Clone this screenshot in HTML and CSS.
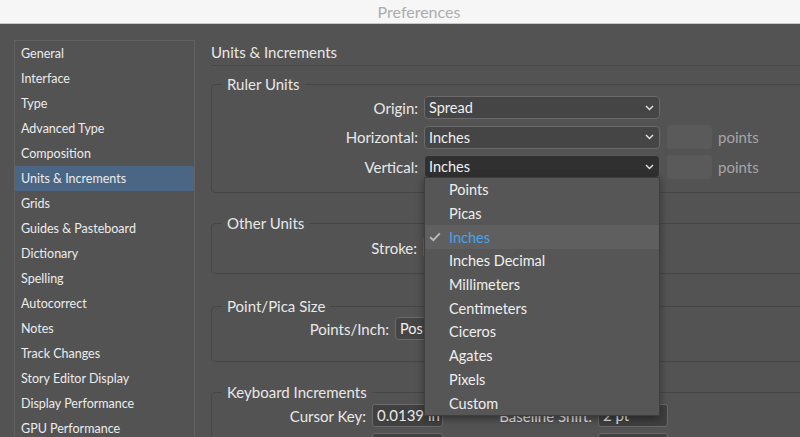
FILE: index.html
```html
<!DOCTYPE html>
<html lang="en">
<head>
    <meta charset="UTF-8">
    <meta name="viewport" content="width=device-width, initial-scale=1.0">
    <title>Preferences</title>
    <link rel="stylesheet" href="styles.css">
</head>
<body>

    <div class="titlebar">Preferences</div>

    <div class="window">
        <!-- Kategorien -->
        <ul class="sidebar">
            <li>General</li>
            <li>Interface</li>
            <li>Type</li>
            <li>Advanced Type</li>
            <li>Composition</li>
            <li class="is-active">Units &amp; Increments</li>
            <li>Grids</li>
            <li>Guides &amp; Pasteboard</li>
            <li>Dictionary</li>
            <li>Spelling</li>
            <li>Autocorrect</li>
            <li>Notes</li>
            <li>Track Changes</li>
            <li>Story Editor Display</li>
            <li>Display Performance</li>
            <li>GPU Performance</li>
        </ul>

        <div class="panel">
            <h1 class="panel-title">Units &amp; Increments</h1>

            <fieldset class="group group-ruler">
                <legend>Ruler Units</legend>
                <div class="rows">
                    <div class="row">
                        <span class="row-label">Origin:</span>
                        <div class="select">
                            <span>Spread</span>
                            <svg class="chevron" width="9" height="6" viewBox="0 0 9 6"><path d="M1 1 L4.5 4.6 L8 1"/></svg>
                        </div>
                    </div>
                    <div class="row">
                        <span class="row-label">Horizontal:</span>
                        <div class="select">
                            <span>Inches</span>
                            <svg class="chevron" width="9" height="6" viewBox="0 0 9 6"><path d="M1 1 L4.5 4.6 L8 1"/></svg>
                        </div>
                        <span class="unit-box"></span>
                        <span class="unit-label">points</span>
                    </div>
                    <div class="row">
                        <span class="row-label">Vertical:</span>
                        <div class="select select-open">
                            <span>Inches</span>
                            <svg class="chevron" width="9" height="6" viewBox="0 0 9 6"><path d="M1 1 L4.5 4.6 L8 1"/></svg>

                            <!-- offenes Dropdown -->
                            <ul class="menu">
                                <li><span class="menu-check"></span>Points</li>
                                <li><span class="menu-check"></span>Picas</li>
                                <li class="is-checked">
                                    <span class="menu-check"><svg width="12" height="10" viewBox="0 0 12 10"><path d="M1.2 5.2 L4.4 8.2 L10.8 1.4"/></svg></span>Inches
                                </li>
                                <li><span class="menu-check"></span>Inches Decimal</li>
                                <li><span class="menu-check"></span>Millimeters</li>
                                <li><span class="menu-check"></span>Centimeters</li>
                                <li><span class="menu-check"></span>Ciceros</li>
                                <li><span class="menu-check"></span>Agates</li>
                                <li><span class="menu-check"></span>Pixels</li>
                                <li><span class="menu-check"></span>Custom</li>
                            </ul>
                        </div>
                        <span class="unit-box"></span>
                        <span class="unit-label">points</span>
                    </div>
                </div>
            </fieldset>

            <fieldset class="group group-other">
                <legend>Other Units</legend>
                <div class="rows">
                    <div class="row">
                        <span class="row-label">Stroke:</span>
                        <div class="select">
                            <span></span>
                            <svg class="chevron" width="9" height="6" viewBox="0 0 9 6"><path d="M1 1 L4.5 4.6 L8 1"/></svg>
                        </div>
                    </div>
                </div>
            </fieldset>

            <fieldset class="group group-pica">
                <legend>Point/Pica Size</legend>
                <div class="rows">
                    <div class="row">
                        <span class="row-label">Points/Inch:</span>
                        <div class="select select-short">
                            <span>Pos</span>
                            <svg class="chevron" width="9" height="6" viewBox="0 0 9 6"><path d="M1 1 L4.5 4.6 L8 1"/></svg>
                        </div>
                    </div>
                </div>
            </fieldset>

            <fieldset class="group group-keys">
                <legend>Keyboard Increments</legend>
                <div class="rows">
                    <div class="row">
                        <span class="row-label">Cursor Key:</span>
                        <span class="field">0.0139 in</span>
                        <span class="row-label row-label-second">Baseline Shift:</span>
                        <span class="field field-narrow">2 pt</span>
                    </div>
                    <div class="row">
                        <span class="row-label"></span>
                        <span class="field"></span>
                        <span class="row-label row-label-second"></span>
                        <span class="field field-narrow"></span>
                    </div>
                </div>
            </fieldset>
        </div>
    </div>

</body>
</html>
```

FILE: styles.css
```css
body {
    margin: 0;
    height: 437px;
    overflow: hidden;
    background: #535353;
    font-family: Lato, 'Open Sans', sans-serif;
    font-size: 15px;
    color: #e8e8e8;
}

.titlebar {
    height: 23px;
    padding-left: 38px;
    background: #f6f6f6;
    border-bottom: 1px solid #c8c8c8;
    text-align: center;
    line-height: 23px;
    font-size: 16px;
    color: #acacac;
}

.window {
    display: flex;
}

/* Linke Kategorienliste */
.sidebar {
    flex-shrink: 0;
    list-style: none;
    margin: 16px 0 0 14px;
    padding: 0;
    width: 179px;
    height: 420px;
    border: 1px solid #626262;
    font-size: 12.5px;
    color: #ececec;
}

.sidebar li {
    height: 25px;
    line-height: 25px;
    padding-left: 6px;
}

.sidebar .is-active {
    background: #4a6684;
}

/* Rechte Seite */
.panel {
    flex-shrink: 0;
    width: 620px;
    margin-left: 16px;
}

.panel-title {
    margin: 16px 0 0;
    font-size: 15px;
    font-weight: normal;
    line-height: 25px;
    border-bottom: 1px solid #494949;
}

.group {
    margin: 20px 0 0;
    padding: 0 0 14px;
    border: 1px solid #464646;
    border-radius: 4px;
    min-width: 0;
}

.group legend {
    margin-left: 10px;
    padding: 0 5px;
    font-size: 15px;
    line-height: 20px;
}

.group-ruler {
    margin-top: 8px;
}

.group-pica {
    margin-top: 22px;
    padding-bottom: 21px;
}

.rows {
    display: grid;
    row-gap: 6.5px;
    padding-top: 2px;
}

.group-other .rows {
    padding-top: 3px;
}

.group-pica .rows {
    padding-top: 1px;
}

.group-keys .rows {
    row-gap: 6px;
}

.row {
    display: flex;
    align-items: center;
    gap: 6px;
    height: 23px;
}

.row-label {
    flex-shrink: 0;
    text-align: right;
}

.group-ruler .row-label { width: 206px; }
.group-other .row-label { width: 205px; }
.group-pica .row-label { width: 177px; }
.group-keys .row-label { width: 154px; }
.group-keys .row-label-second { width: 143px; }

/* Auswahlfelder */
.select {
    position: relative;
    box-sizing: border-box;
    display: flex;
    justify-content: space-between;
    align-items: center;
    width: 236px;
    height: 23px;
    padding: 0 5px 0 4px;
    background: #454545;
    border: 1px solid #6a6a6a;
    border-radius: 4px;
    font-size: 14.5px;
    color: #f0f0f0;
    white-space: nowrap;
}

.select-short {
    width: 200px;
}

.select-open {
    background: #303030;
    border-color: #575757;
}

.chevron path {
    fill: none;
    stroke: #e2e2e2;
    stroke-width: 1.4;
}

.unit-box {
    width: 45px;
    height: 24px;
    margin-left: 1px;
    background: #5a5a5a;
    border-radius: 3px;
}

.unit-label {
    color: #a6a6a6;
}

.field {
    box-sizing: border-box;
    flex-shrink: 0;
    width: 71px;
    height: 23px;
    padding: 0 4px;
    line-height: 21px;
    background: #404040;
    border: 1px solid #6a6a6a;
    border-radius: 3px;
    overflow: hidden;
    white-space: nowrap;
}

.field-narrow {
    width: 70px;
}

/* Dropdown-Menue */
.menu {
    position: absolute;
    top: 100%;
    left: -1px;
    z-index: 5;
    box-sizing: border-box;
    width: 236px;
    margin: 0;
    padding: 0;
    list-style: none;
    background: #565656;
    border: 1px solid #3e3e3e;
    box-shadow: 0 3px 8px rgba(0, 0, 0, 0.4);
    font-size: 14.5px;
    color: #efefef;
}

.menu li {
    display: flex;
    align-items: center;
    height: 23.7px;
}

.menu-check {
    display: flex;
    align-items: center;
    width: 20px;
    padding-left: 4px;
}

.menu-check path {
    fill: none;
    stroke: #b8b8b8;
    stroke-width: 2;
}

.menu .is-checked {
    background: #5f5f5f;
    color: #4aa3ea;
}
```
